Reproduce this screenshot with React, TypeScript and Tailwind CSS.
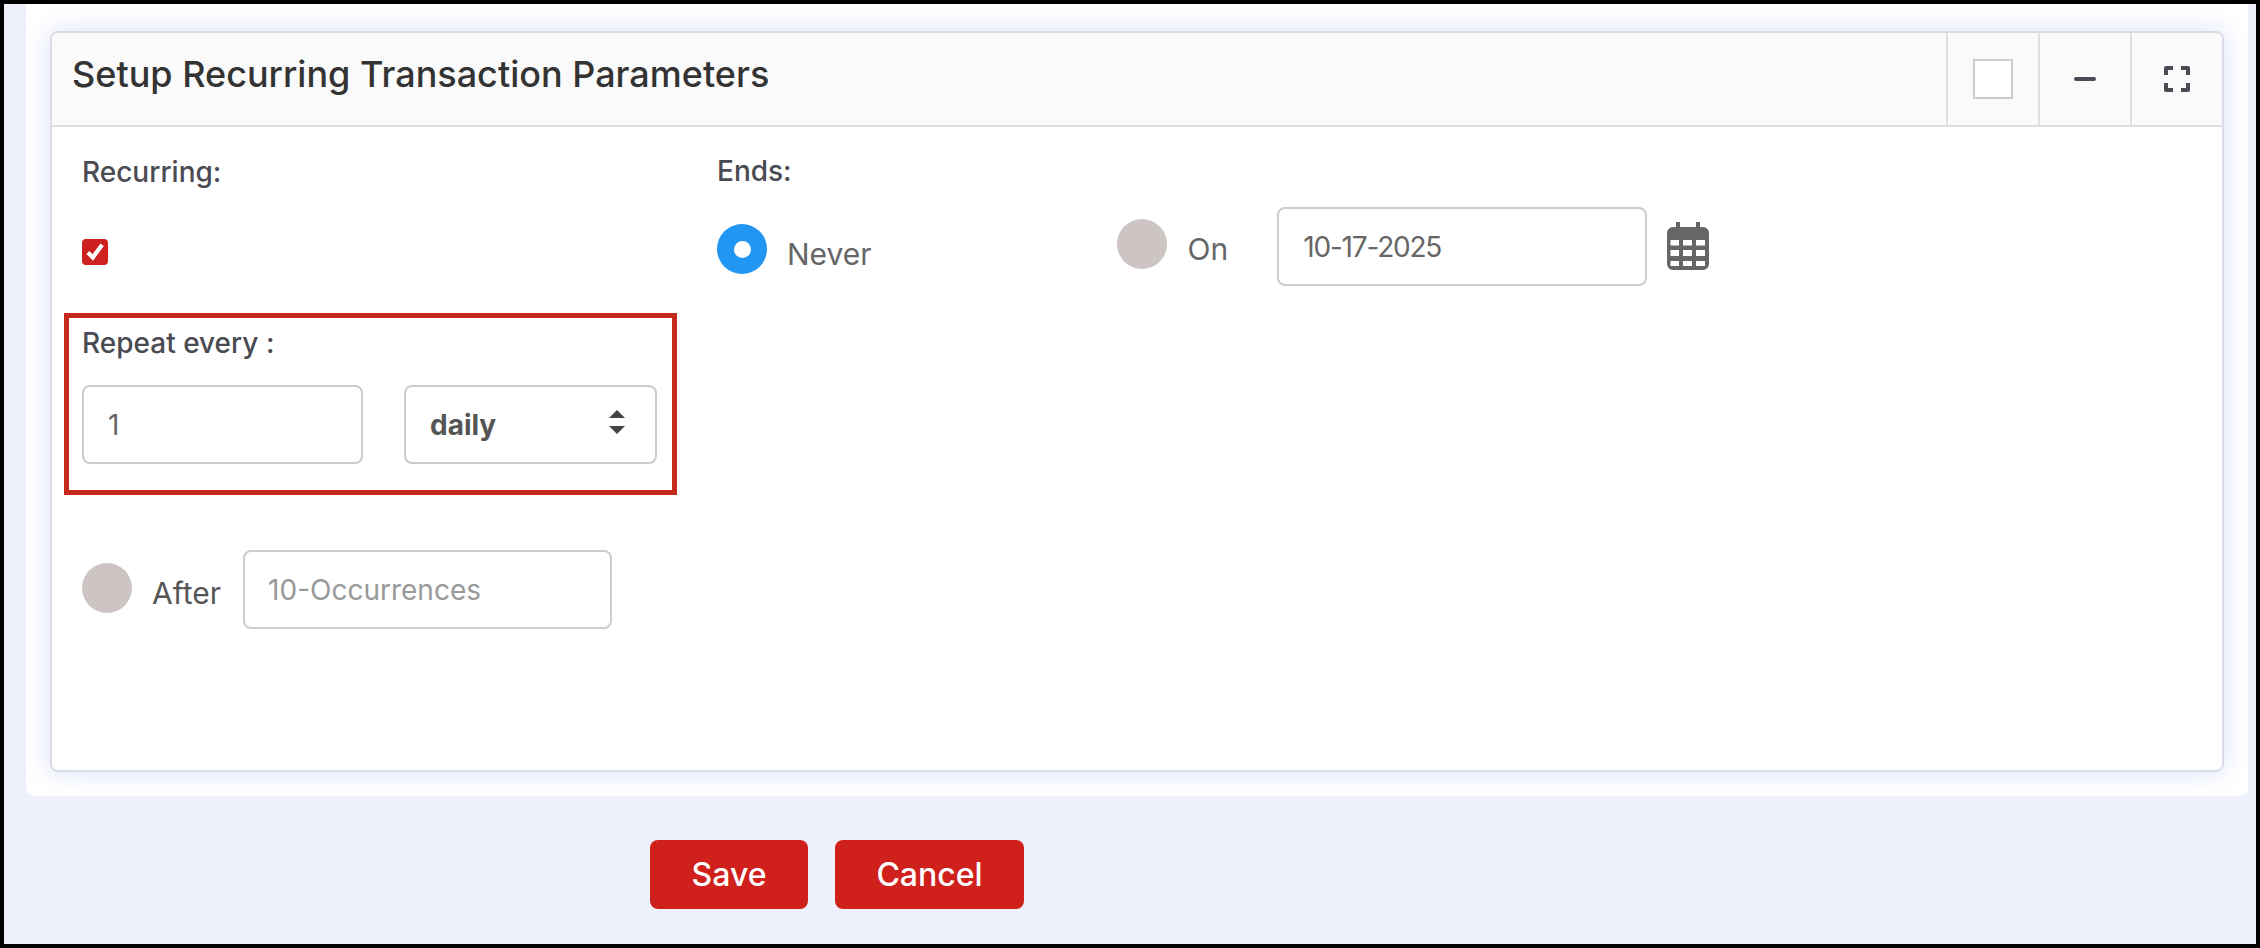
import React from 'react';

function Radio({ checked, className }: { checked?: boolean; className?: string }) {
  return (
    <span
      className={`flex h-[50px] w-[50px] shrink-0 items-center justify-center rounded-full ${checked ? 'bg-[#2196f3]' : 'bg-[#cdc4c4]'} ${className ?? ''}`}
    >
      {checked && <span className="h-[17px] w-[17px] rounded-full bg-white" />}
    </span>
  );
}

function CalendarIcon() {
  return (
    <svg width="42" height="48" viewBox="0 0 42 48" className="shrink-0">
      <path
        fill="#666666"
        fillRule="evenodd"
        d="M9 0h4v5h16V0h4v5h3a6 6 0 0 1 6 6v31a6 6 0 0 1-6 6H6a6 6 0 0 1-6-6V11a6 6 0 0 1 6-6h3zM3.5 18v5.5H12V18zM16 18v5.5h9V18zM29 18v5.5h9V18zM3.5 28v6H12v-6zM16 28v6h9v-6zM29 28v6h9v-6zM3.5 39v5H12v-5zM16 39v5h9v-5zM29 39v5h9v-5z"
      />
    </svg>
  );
}

export default function App() {
  return (
    <div className="h-[948px] border-4 border-black bg-[#eef0fb] font-['Inter',sans-serif]">
      {/* Panel */}
      <div className="ml-[22px] mr-2 h-[792px] rounded-b-lg bg-white px-6 pt-[27px]">
        <div className="h-[741px] overflow-hidden rounded-lg border-2 border-[#d9dce6] bg-white shadow-[0_0_26px_rgba(205,213,250,0.75)]">
          {/* Header */}
          <div className="flex h-[94px] items-stretch border-b-2 border-[#dedede] bg-[#fafafa]">
            <h1 className="flex-1 pl-5 pt-[20px] text-[36px] font-medium leading-[42px] text-[#333333]">
              Setup Recurring Transaction Parameters
            </h1>
            <div className="flex w-[92px] items-center justify-center border-l-2 border-[#dedede]">
              <span className="h-10 w-10 border-2 border-[#cccccc] bg-white" />
            </div>
            <div className="flex w-[92px] items-center justify-center border-l-2 border-[#dedede]">
              <span className="h-1 w-[22px] rounded-full bg-[#4b4b55]" />
            </div>
            <div className="flex w-[92px] items-center justify-center border-l-2 border-[#dedede]">
              <svg width="26" height="26" viewBox="0 0 26 26" fill="none" stroke="#4b4b55" strokeWidth="4" strokeLinejoin="round">
                <path d="M2 9V2h7M17 2h7v7M24 17v7h-7M9 24H2v-7" />
              </svg>
            </div>
          </div>

          {/* Body */}
          <div className="flex pl-3 text-[#4a4a52]">
            <div className="w-[613px]">
              <label className="mt-[27px] ml-[18px] block text-[28px] font-medium leading-9">Recurring:</label>
              <span className="ml-[18px] mt-[49px] flex h-[26px] w-[26px] items-center justify-center rounded-[4px] bg-[#cf2020]">
                <svg width="22" height="22" viewBox="0 0 20 20" fill="none" stroke="white" strokeWidth="3.8">
                  <path d="M3.5 10.5l4.5 4.5L16.5 3.5" />
                </svg>
              </span>

              <div className="mt-[48px] h-[182px] border-[5px] border-[#c5281c] pl-[13px]">
                <label className="mt-[7px] block text-[28px] font-medium leading-9">Repeat every :</label>
                <div className="mt-6 flex">
                  <input
                    readOnly
                    value="1"
                    className="h-[79px] w-[281px] rounded-lg border-2 border-[#cccccc] bg-white pl-6 text-[28px] text-[#666666] outline-none"
                  />
                  <div className="relative ml-[41px]">
                    <select className="h-[79px] w-[253px] appearance-none rounded-lg border-2 border-[#cccccc] bg-white pl-6 text-[28px] font-bold text-[#555555] outline-none">
                      <option>daily</option>
                    </select>
                    <svg width="16" height="24" viewBox="0 0 16 24" className="absolute right-[32px] top-[25px]" fill="#444444">
                      <path d="M8 0l8 8H0zM0 16h16l-8 8z" />
                    </svg>
                  </div>
                </div>
              </div>

              <div className="ml-[18px] mt-[55px] flex items-start">
                <Radio className="mt-[13px]" />
                <span className="ml-5 mt-[25px] text-[30px] leading-9 text-[#555555]">After</span>
                <input
                  readOnly
                  placeholder="10-Occurrences"
                  className="ml-[22px] h-[79px] w-[369px] rounded-lg border-2 border-[#cccccc] bg-white pl-[23px] text-[28px] text-[#666666] outline-none placeholder:text-[#999999]"
                />
              </div>
            </div>

            <div className="ml-10">
              <label className="mt-[26px] block text-[28px] font-medium leading-9">Ends:</label>
              <div className="mt-[18px] flex items-start">
                <Radio checked className="mt-[17px]" />
                <span className="ml-5 mt-[29px] text-[30px] leading-9 text-[#666666]">Never</span>
                <Radio className="ml-[245px] mt-[12px]" />
                <span className="ml-[21px] mt-[24px] text-[30px] leading-9 text-[#666666]">On</span>
                <input
                  readOnly
                  value="10-17-2025"
                  className="ml-[49px] h-[79px] w-[370px] rounded-lg border-2 border-[#cccccc] bg-white pl-6 text-[28px] tracking-[-1.2px] text-[#666666] outline-none"
                />
                <span className="ml-5 mt-[15px]">
                  <CalendarIcon />
                </span>
              </div>
            </div>
          </div>
        </div>
      </div>

      {/* Footer buttons */}
      <div className="ml-[646px] mt-11 flex gap-[27px]">
        <button className="h-[69px] w-[158px] rounded-lg bg-[#cf201c] text-[32px] font-medium text-white">Save</button>
        <button className="h-[69px] w-[189px] rounded-lg bg-[#cf201c] text-[32px] font-medium text-white">Cancel</button>
      </div>
    </div>
  );
}
